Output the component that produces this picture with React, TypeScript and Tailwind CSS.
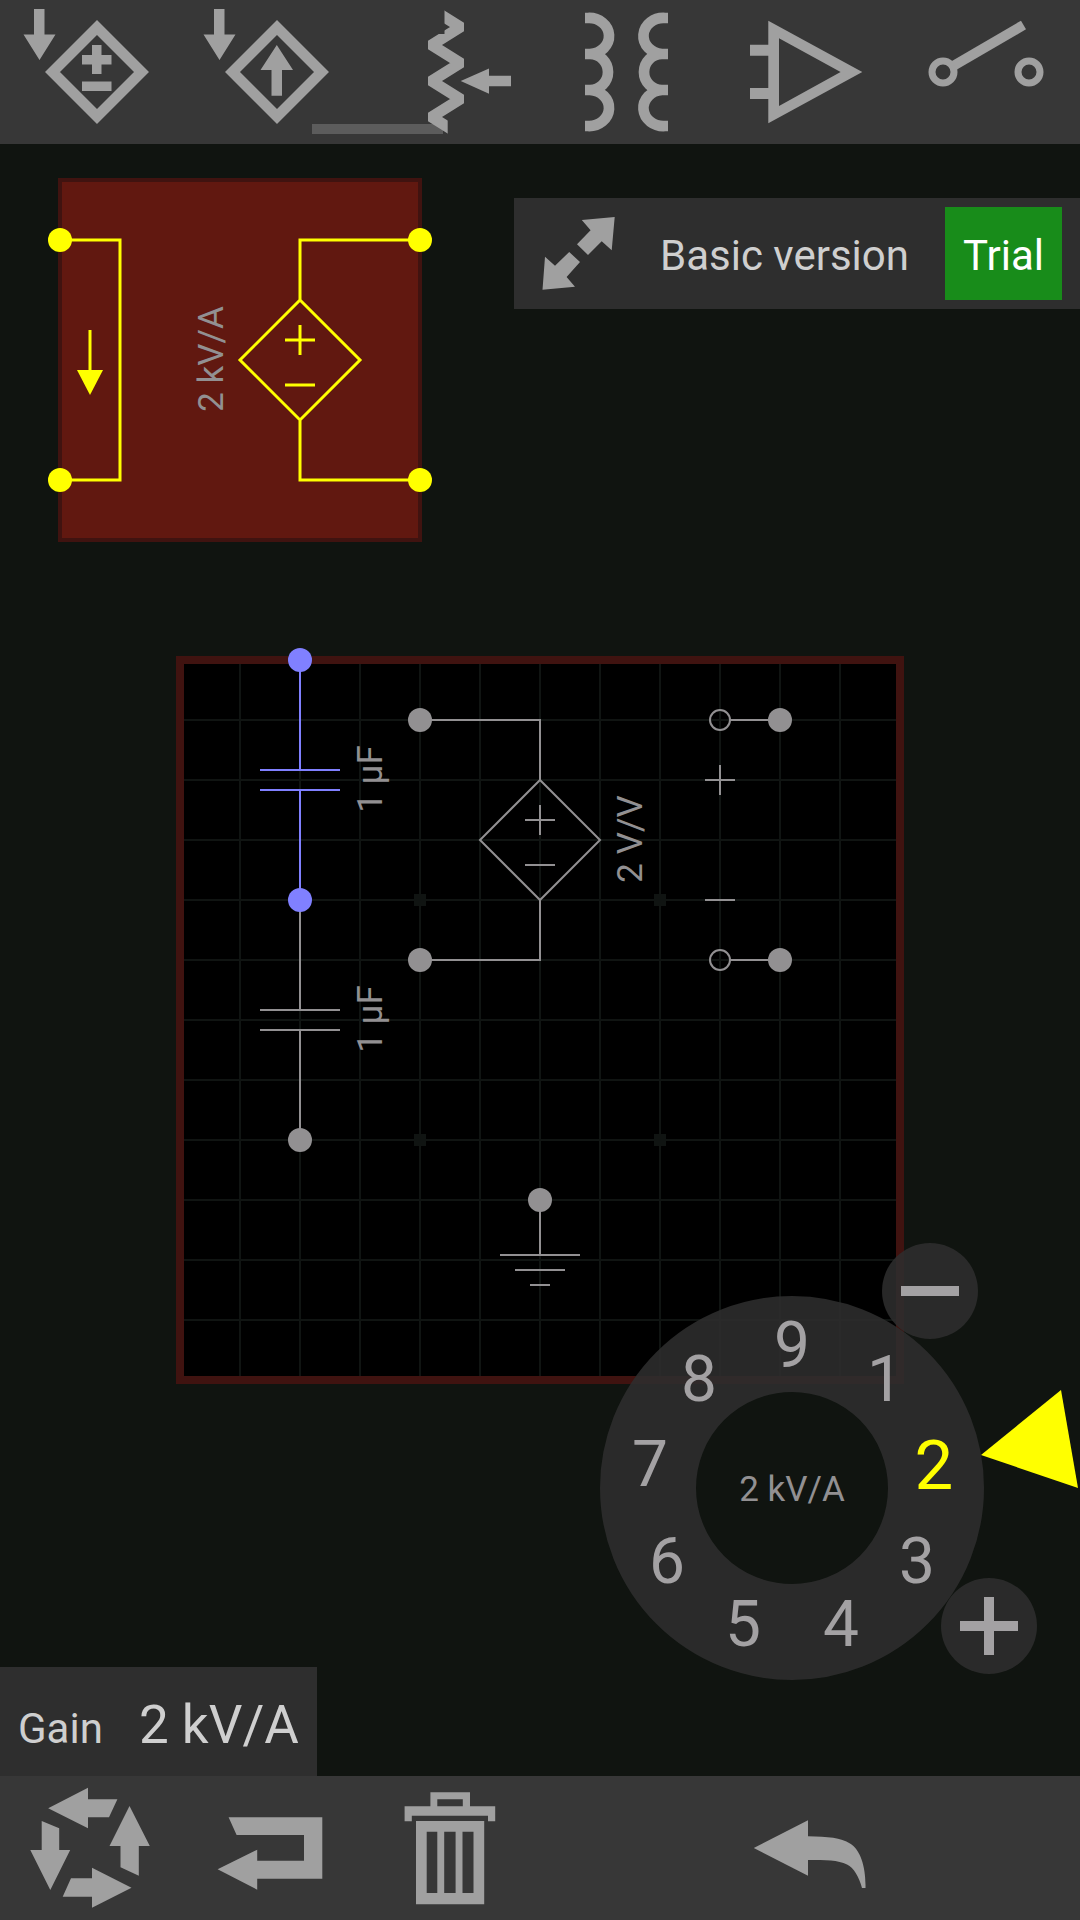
import type { ReactNode } from 'react'

const WIRE = '#929092'
const LIVE = '#8080ff'
const SELECTED = '#ffff00'

function ToolButton({ label, className = '', children }: { label: string; className?: string; children: ReactNode }) {
  return (
    <button type="button" aria-label={label} className={`flex h-36 items-center justify-center text-[#a0a0a0] ${className}`}>
      <svg viewBox="0 0 180 144" className="h-36 w-full" fill="currentColor" aria-hidden="true">
        {children}
      </svg>
    </button>
  )
}

function ControlledDiamond() {
  return (
    <>
      <path d="M34 9H44.500V34.500H55.500L39.500 60L23.500 34.500H34Z" />
      <path d="M97 27.500L141.500 72L97 116.500L52.500 72Z" fill="none" stroke="currentColor" strokeWidth="10.600" />
    </>
  )
}

function Header() {
  return (
    <header className="relative isolate grid grid-cols-6 bg-[#373737]">
      <div className="absolute bottom-2.5 left-[312px] -z-10 h-2.5 w-[131px] bg-[#5c5c5c]" />
      <ToolButton label="Current-controlled voltage source">
        <ControlledDiamond />
        <path d="M92 45H101.500V55H111.500V64.500H101.500V74H92V64.500H82V55H92ZM82 81.500H111.500V91H82Z" />
      </ToolButton>
      <ToolButton label="Current-controlled current source">
        <ControlledDiamond />
        <path d="M96.800 45L113 70H102V95.700H91.500V70H80.500Z" />
      </ToolButton>
      <ToolButton label="Potentiometer">
        <clipPath id="zigzag-ends">
          <path d="M84.500 0H104V115H87.700V144H68V34H84.500Z" />
        </clipPath>
        <path
          clipPath="url(#zigzag-ends)"
          d="M71.500 9L100.500 27L71.500 45L100.500 63L71.500 81L100.500 99L71.500 117L100.500 135"
          fill="none"
          stroke="currentColor"
          strokeWidth="11"
          strokeLinejoin="miter"
        />
        <path d="M100.700 81L129 68.500V75.700H151V86.300H129V93.700Z" />
      </ToolButton>
      <ToolButton label="Transformer">
        <path
          d="M45 18H48A20 18 0 0 1 50 54H45M50 54A18 18 0 0 1 50 90H45M50 90A20 18 0 0 1 48 126H45M128 18H125A20 18 0 0 0 122 54H128M122 54A18 18 0 0 0 122 90H128M122 90A20 18 0 0 0 125 126H128"
          fill="none"
          stroke="currentColor"
          strokeWidth="10.700"
        />
      </ToolButton>
      <ToolButton label="Operational amplifier">
        <path
          fillRule="evenodd"
          d="M48.300 20.700L142.300 72L48.300 123.300V99H30V88H48.300V55.700H30V44.700H48.300ZM59 38.300V106L120.600 72Z"
        />
      </ToolButton>
      <ToolButton label="Switch">
        <g fill="none" stroke="currentColor">
          <circle cx="43" cy="72" r="11" strokeWidth="7" />
          <circle cx="129" cy="72" r="11" strokeWidth="7" />
          <path d="M54 65.500L123.500 25" strokeWidth="10" />
        </g>
      </ToolButton>
    </header>
  )
}

function Node({ x, y, color = WIRE }: { x: number; y: number; color?: string }) {
  return <circle cx={x} cy={y} r="12" fill={color} />
}

function Value({ x, y, children }: { x: number; y: number; children: string }) {
  return (
    <text
      transform={`translate(${x} ${y}) rotate(-90)`}
      textAnchor="middle"
      className="font-[Roboto,sans-serif] text-[35px]"
      fill={WIRE}
    >
      {children}
    </text>
  )
}

function Schematic() {
  const lines = Array.from({ length: 11 }, (_, i) => 60 * (i + 1))
  return (
    <svg
      viewBox="0 144 1080 1632"
      preserveAspectRatio="xMidYMin meet"
      className="absolute inset-0 h-full w-full"
      role="img"
      aria-label="Circuit schematic"
    >
      {/* Board and grid */}
      <rect x="180" y="660" width="720" height="720" fill="#000" />
      {lines.map((d) => (
        <path key={d} d={`M${180 + d} 660V1380M180 ${660 + d}H900`} stroke="#101412" strokeWidth="2" />
      ))}
      <path d="M414 894h12v12h-12ZM654 894h12v12h-12ZM414 1134h12v12h-12ZM654 1134h12v12h-12Z" fill="#101412" />
      <rect x="180" y="660" width="720" height="720" fill="none" stroke="#401310" strokeWidth="8" />

      {/* Capacitors */}
      <path d="M300 900V1010M260 1010H340M260 1030H340M300 1030V1140" stroke={WIRE} strokeWidth="2" />
      <path d="M300 660V770M260 770H340M260 790H340M300 790V900" stroke={LIVE} strokeWidth="2" />
      <Node x={300} y={660} color={LIVE} />
      <Node x={300} y={900} color={LIVE} />
      <Node x={300} y={1140} />
      <Value x={382} y={779}>1 µF</Value>
      <Value x={382} y={1019}>1 µF</Value>

      {/* Voltage-controlled source */}
      <g fill="none" stroke={WIRE} strokeWidth="2">
        <path d="M420 720H540V780L600 840L540 900L480 840L540 780M540 900V960H420" />
        <path d="M525 820H555M540 805V835M525 865H555" />
      </g>
      <Node x={420} y={720} />
      <Node x={420} y={960} />
      <Value x={642} y={839}>2 V/V</Value>

      {/* Controlling port */}
      <g fill="none" stroke={WIRE} strokeWidth="2">
        <circle cx="720" cy="720" r="10" />
        <circle cx="720" cy="960" r="10" />
        <path d="M730 720H780M730 960H780M705 780H735M720 765V795M705 900H735" />
      </g>
      <Node x={780} y={720} />
      <Node x={780} y={960} />

      {/* Ground */}
      <path d="M540 1200V1255M500 1255H580M515 1270H565M530 1285H550" stroke={WIRE} strokeWidth="2" />
      <Node x={540} y={1200} />

      {/* Selected current-controlled source */}
      <rect x="60" y="180" width="360" height="360" fill="#611810" stroke="#401310" strokeWidth="4" />
      <g fill="none" stroke={SELECTED} strokeWidth="3">
        <path d="M60 240H120V480H60M90 330V372" />
        <path d="M420 240H300V300L360 360L300 420L240 360L300 300M300 420V480H420" />
        <path d="M285 340H315M300 325V355M285 385H315" />
      </g>
      <path d="M77 370H103L90 395Z" fill={SELECTED} />
      <Node x={60} y={240} color={SELECTED} />
      <Node x={60} y={480} color={SELECTED} />
      <Node x={420} y={240} color={SELECTED} />
      <Node x={420} y={480} color={SELECTED} />
      <Value x={223} y={359}>2 kV/A</Value>
    </svg>
  )
}

function VersionPanel() {
  return (
    <section className="relative mt-[54px] flex items-center self-end bg-[#2e2e2e] py-[9px] pr-[18px] pl-7">
      <button type="button" aria-label="Expand view" className="text-[#a0a0a0]">
        <svg viewBox="542 217 73 73" className="size-[73px]" fill="currentColor" aria-hidden="true">
          <path d="M614.700 217L581.800 220L590.600 230.300L577 244.300L588 255L601.700 241.300L611.700 250.300Z" />
          <path d="M542.500 289.700L575 286.700L566.600 277L580 262L569.200 252L555 265.700L545 256.700Z" />
        </svg>
      </button>
      <span className="ml-[45px] pt-1 text-[42px] text-[#cfcfcf]">Basic version</span>
      <button type="button" className="ml-9 h-[93px] bg-[#188c1a] px-[18px] pt-1 text-[42px] text-white">
        Trial
      </button>
    </section>
  )
}

function Dial() {
  const digits = [1, 2, 3, 4, 5, 6, 7, 8, 9]
  return (
    <section aria-label="Gain dial" className="absolute right-0 bottom-[102px] h-[432px] w-[480px]">
      <div className="absolute top-[54px] left-0 flex size-[384px] items-center justify-center rounded-full border-[96px] border-[#2e2e2e]/88">
        <output className="pt-0.5 text-[35px] whitespace-nowrap text-[#929092]">2 kV/A</output>
      </div>
      <div className="absolute top-[246px] left-48">
        {digits.map((n) => {
          const angle = (n * 40 * Math.PI) / 180
          return (
            <button
              key={n}
              type="button"
              aria-pressed={n === 2}
              className={`absolute flex size-20 -translate-1/2 items-center justify-center pt-1 ${
                n === 2 ? 'text-[69px] text-[#ffff00]' : 'text-[64px] text-[#a3a1a3]'
              }`}
              style={{ left: Math.round(144 * Math.sin(angle)), top: Math.round(-144 * Math.cos(angle)) }}
            >
              {n}
            </button>
          )
        })}
      </div>
      <button
        type="button"
        aria-label="Decrease"
        className="absolute top-px left-[282px] flex size-24 items-center justify-center rounded-full bg-[#2e2e2e]/88"
      >
        <span className="h-2.5 w-[58px] bg-[#a3a1a3]" />
      </button>
      <button
        type="button"
        aria-label="Increase"
        className="absolute top-[336px] left-[341px] grid size-24 place-items-center rounded-full bg-[#2e2e2e]/88"
      >
        <span className="col-start-1 row-start-1 h-2.5 w-[58px] bg-[#a3a1a3]" />
        <span className="col-start-1 row-start-1 h-[58px] w-2.5 bg-[#a3a1a3]" />
      </button>
      <svg viewBox="0 0 97 98" className="absolute top-[148px] right-0.5 h-[98px] w-[97px]" fill="#ffff00" aria-hidden="true">
        <path d="M0 65L80 0L97 98Z" />
      </svg>
    </section>
  )
}

function Footer() {
  return (
    <footer className="grid grid-cols-6 bg-[#373737]">
      <ToolButton label="Rotate">
        <path d="M48.200 32.300L88 11.700V23.300H117.400L109 41.300H88V52.300Z" />
        <path d="M129.500 30L149.800 70H138.800V99.700L120.500 91.300V70H109.500Z" />
        <path d="M131.500 111.700L92 131.700V120.700H62.700L71 102.300H92V91.700Z" />
        <path d="M50.300 114L30.300 74H41.700V45L59.200 52.300V74H70.200Z" />
      </ToolButton>
      <ToolButton label="Flip">
        <path d="M48.600 41.300H142.300V102.700H77.200V113.700L37.600 93.300L77.200 73.700V84.700H124V59H56.600Z" />
      </ToolButton>
      <ToolButton label="Delete">
        <path
          fillRule="evenodd"
          d="M70.400 16.300H110V30.300H135.200V45.300H128V39.700H51.800V45.300H44.600V30.300H70.400ZM77.300 23.300V30.300H102.800V23.300Z"
        />
        <path
          fillRule="evenodd"
          d="M56 45H124.200V128.300H56ZM66.700 55.700V117H77.300V55.700ZM84.200 55.700V117H95.600V55.700ZM102.500 55.700V117H113.500V55.700Z"
        />
      </ToolButton>
      <ToolButton label="Undo" className="col-start-5">
        <path d="M33.800 72L88 44.300V60.300C108 60.500 121 62 130 67.500C141 74 146 92 145.500 112H142C139 101 134 92 127 88.500C118 84 106 84 88 84V99.700Z" />
      </ToolButton>
    </footer>
  )
}

export default function App() {
  return (
    <div className="flex min-h-screen flex-col bg-[#101410] font-[Roboto,sans-serif] leading-none">
      <Header />
      <main className="relative flex min-h-[1632px] flex-1 flex-col">
        <Schematic />
        <VersionPanel />
        <Dial />
        <section className="relative mt-auto flex items-baseline gap-9 self-start bg-[#2e2e2e] px-[18px] pt-8 pb-6 text-[#cfcfcf]">
          <span className="text-[42px]">Gain</span>
          <output className="text-[53px]">2 kV/A</output>
        </section>
      </main>
      <Footer />
    </div>
  )
}
